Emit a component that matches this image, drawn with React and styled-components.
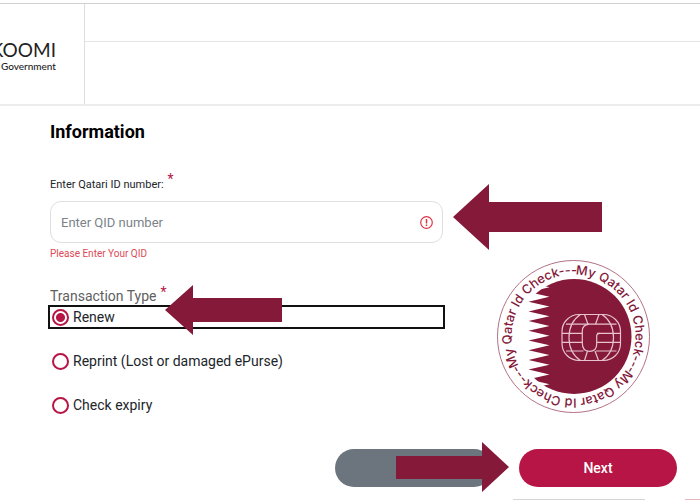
import React, { useState } from 'react';
import styled, { createGlobalStyle } from 'styled-components';

const GlobalStyle = createGlobalStyle`
  * {
    box-sizing: border-box;
  }
  body {
    margin: 0;
    background: #fff;
    color: #212529;
    font-family: Roboto, 'Noto Sans', sans-serif;
    overflow-x: hidden;
  }
`;

const Header = styled.header`
  display: flex;
  margin-top: 3px;
  border-top: 1px solid #d0d0d0;
  border-bottom: 2px solid #ececec;
`;

const Brand = styled.a`
  display: flex;
  flex-direction: column;
  align-items: flex-end;
  justify-content: center;
  flex: 0 0 85px;
  padding: 4px 28px 0 0;
  border-right: 1px solid #dedede;
  color: #222;
  font-family: Lato, sans-serif;
  text-decoration: none;
  overflow: hidden;
`;

const BrandName = styled.span`
  font-size: 19px;
  line-height: 20px;
`;

const BrandTagline = styled.span`
  font-size: 10px;
  font-weight: 500;
  line-height: 12px;
`;

const HeaderRows = styled.div`
  flex: 1;
`;

const TopRow = styled.div`
  height: 38px;
  border-bottom: 1px solid #e4e4e4;
`;

const NavRow = styled.nav`
  height: 62px;
`;

const Form = styled.form`
  padding: 14px 23px 0 50px;
`;

const Title = styled.h1`
  margin: 0;
  color: #000;
  font-size: 18px;
  line-height: 24px;
`;

const Columns = styled.div`
  display: grid;
  grid-template-columns: 1fr 153px;
  gap: 54px;
  align-items: end;
  padding-right: 27px;
`;

const Field = styled.div`
  padding-top: 33px;
`;

const FieldLabel = styled.label`
  display: block;
  font-size: 11px;
  line-height: 16px;
`;

const Required = styled.sup`
  margin-left: 4px;
  color: #b71545;
  font-size: 14px;
  line-height: 0;
  vertical-align: 4px;
`;

const InputWrapper = styled.div`
  position: relative;
  display: flex;
  align-items: center;
  height: 42px;
  margin-top: 8px;
  padding: 0 9px 0 10px;
  border: 1px solid #dfdfdf;
  border-radius: 11px;
`;

const TextInput = styled.input`
  flex: 1;
  min-width: 0;
  padding: 0;
  border: 0;
  outline: none;
  background: transparent;
  font-family: inherit;
  font-size: 13px;
  &::placeholder {
    color: #7b838a;
  }
`;

const ErrorText = styled.p`
  margin: 3px 0 0;
  color: #dc4a55;
  font-size: 10px;
  line-height: 16px;
`;

const TypeGroup = styled.fieldset`
  min-width: 0;
  margin: 25px 0 0;
  padding: 0;
  border: 0;
`;

const Legend = styled.legend`
  padding: 0;
  color: #606060;
  font-size: 14px;
  line-height: 18px;
`;

const Option = styled.label`
  position: relative;
  display: flex;
  align-items: center;
  gap: 4px;
  height: 24px;
  margin: 0 -2px 20px;
  padding-left: 2px;
  border: 2px solid ${(props) => (props.$active ? '#111' : 'transparent')};
  font-size: 14px;
  line-height: 20px;
`;

const Radio = styled.input`
  appearance: none;
  width: 17px;
  height: 17px;
  margin: 0;
  border: 2px solid #b71545;
  border-radius: 50%;
  background: #fff;
  &:checked {
    background: radial-gradient(circle, #b71545 4px, #fff 5px);
  }
`;

const Stamp = styled.svg`
  display: block;
  width: 153px;
  height: 153px;
  margin-bottom: 24px;
`;

const Actions = styled.div`
  display: flex;
  justify-content: flex-end;
  gap: 26px;
  margin-top: 12px;
`;

const Button = styled.button`
  position: relative;
  width: 158px;
  height: 38px;
  border: 0;
  border-radius: 19px;
  background: ${(props) => (props.$primary ? '#b71545' : '#6c757d')};
  color: #fff;
  font-family: inherit;
  font-size: 14px;
  font-weight: 500;
  cursor: pointer;
`;

const Arrow = styled.svg`
  position: absolute;
  left: ${(props) => props.$left};
  top: ${(props) => props.$top};
  fill: #84193a;
  pointer-events: none;
`;

const BottomRule = styled.div`
  display: flex;
  justify-content: flex-end;
  gap: 40px;
  margin-top: 12px;
`;

const Rule = styled.span`
  width: ${(props) => props.$width};
  height: 1px;
  background: ${(props) => props.$color};
`;

const OPTIONS = [
  { value: 'renew', label: 'Renew' },
  { value: 'reprint', label: 'Reprint (Lost or damaged ePurse)' },
  { value: 'expiry', label: 'Check expiry' },
];

// serrated edge of the flag, one tooth every 9.7 units
const teeth = Array.from({ length: 13 }, (_, i) => {
  const y = 12.6 + i * 9.7;
  return `L31.5 ${y} L52.5 ${y + 4.85}`;
}).join(' ');

function QatarStamp() {
  return (
    <Stamp viewBox='0 0 153 153' role='img' aria-label='My Qatar Id Check'>
      <defs>
        <clipPath id='disc'>
          <circle cx='77' cy='76.5' r='57.5' />
        </clipPath>
        <path
          id='ring'
          d='M76.5 14.5 A62 62 0 0 1 76.5 138.5 A62 62 0 0 1 76.5 14.5'
        />
      </defs>
      <circle cx='76.5' cy='76.5' r='76' fill='#fff' stroke='#a04c67' strokeWidth='0.8' />
      <path clipPath='url(#disc)' fill='#84193a' d={`M52.5 7 ${teeth} L52.5 153 H153 V7 Z`} />
      {[2, 122, 242].map((angle) => (
        <text
          key={angle}
          transform={`rotate(${angle} 76.5 76.5)`}
          fill='#84193a'
          fontFamily='Inter, sans-serif'
          fontSize='12.8'
          fontWeight='500'
        >
          <textPath href='#ring'>My Qatar Id Check---</textPath>
        </text>
      ))}
      <g fill='none' stroke='#e8c3cf' strokeWidth='1.2'>
        <rect x='65' y='54.5' width='58.5' height='46' rx='17' />
        <path d='M69 64.2 H119.5 M65 73.3 H85.3 M65 82.3 H85.3 M69 91 H86.5 M100 73.3 H123.5 M100 82.3 H123.5 M99 91 H119.5' />
        <path d='M83.5 54.5 Q72 62 72 77.5 Q72 93 83.5 100.5' />
        <path d='M105 54.5 Q116.5 62 116.5 77.5 Q116.5 93 105 100.5' />
        <path d='M87.5 54.5 L91 64.2 M102 54.5 L98.5 64.2 M90.5 91 L87.5 100.5 M98 91 L101.5 100.5' />
        <path d='M92 64.2 Q85.3 65 85.3 71 V83 Q85.3 91.3 92.5 91.3 Q99.7 91.3 99.7 84 V76 Q99.7 73.3 103 73.3' />
      </g>
    </Stamp>
  );
}

function App() {
  const [qid, setQid] = useState('');
  const [type, setType] = useState('renew');

  return (
    <>
      <GlobalStyle />
      <Header>
        <Brand href='#'>
          <BrandName>KOOMI</BrandName>
          <BrandTagline>Government</BrandTagline>
        </Brand>
        <HeaderRows>
          <TopRow />
          <NavRow />
        </HeaderRows>
      </Header>
      <Form onSubmit={(e) => e.preventDefault()}>
        <Title>Information</Title>
        <Columns>
          <div>
            <Field>
              <FieldLabel htmlFor='qid'>
                Enter Qatari ID number:<Required>*</Required>
              </FieldLabel>
              <InputWrapper>
                <TextInput
                  id='qid'
                  placeholder='Enter QID number'
                  value={qid}
                  onChange={(e) => setQid(e.target.value)}
                />
                <svg width='13' height='13' viewBox='0 0 13 13' fill='none' stroke='#dc3545'>
                  <circle cx='6.5' cy='6.5' r='5.8' strokeWidth='1.2' />
                  <path d='M6.5 3 V7.4 M6.5 8.6 V10' strokeWidth='1.5' />
                </svg>
                <Arrow $left='calc(100% + 11px)' $top='-18px' width='149' height='66'>
                  <path d='M0 33 L36 0 V18 H149 V48 H36 V66 Z' />
                </Arrow>
              </InputWrapper>
              <ErrorText>Please Enter Your QID</ErrorText>
            </Field>
            <TypeGroup>
              <Legend>
                Transaction Type<Required>*</Required>
              </Legend>
              {OPTIONS.map(({ value, label }) => (
                <Option key={value} $active={type === value}>
                  <Radio
                    type='radio'
                    name='type'
                    value={value}
                    checked={type === value}
                    onChange={() => setType(value)}
                  />
                  {label}
                  {value === 'renew' && (
                    <Arrow $left='115px' $top='-22px' width='117' height='50'>
                      <path d='M0 25 L28 0 V13 H117 V37 H28 V50 Z' />
                    </Arrow>
                  )}
                </Option>
              ))}
            </TypeGroup>
          </div>
          <QatarStamp />
        </Columns>
        <Actions>
          <Button type='button' aria-label='Back'>
            <Arrow $left='61px' $top='-7px' width='113' height='50'>
              <path d='M113 25 L86 0 V14 H0 V37 H86 V50 Z' />
            </Arrow>
          </Button>
          <Button type='submit' $primary>
            Next
          </Button>
        </Actions>
      </Form>
      <BottomRule>
        <Rule $width='132px' $color='#d5d5d5' />
        <Rule $width='15px' $color='#e5b5c0' />
      </BottomRule>
    </>
  );
}

export default App;
